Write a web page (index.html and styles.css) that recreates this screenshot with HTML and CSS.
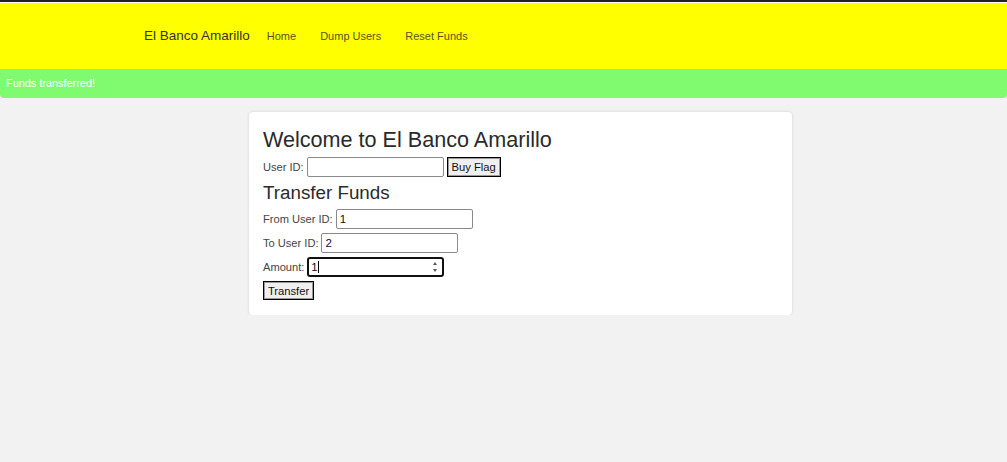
FILE: index.html
```html
<!DOCTYPE html>
<html>
<head>
<meta charset="utf-8">
<title>El Banco Amarillo</title>
<link rel="stylesheet" href="styles.css">
</head>
<body>
<header class="header">
  <nav class="nav">
    <a class="brand" href="#">El Banco Amarillo</a>
    <a class="nav-link" href="#">Home</a>
    <a class="nav-link" href="#">Dump Users</a>
    <a class="nav-link" href="#">Reset Funds</a>
  </nav>
</header>
<div class="alert">Funds transferred!</div>
<main class="card">
  <h1 class="title">Welcome to El Banco Amarillo</h1>
  <div class="row">
    <label class="label">User ID:</label>
    <input class="field" type="text" value="">
    <button class="btn btn-flag">Buy Flag</button>
  </div>
  <h2 class="subtitle">Transfer Funds</h2>
  <div class="row">
    <label class="label">From User ID:</label>
    <input class="field" type="text" value="1">
  </div>
  <div class="row">
    <label class="label">To User ID:</label>
    <input class="field" type="text" value="2">
  </div>
  <div class="row">
    <label class="label">Amount:</label>
    <span class="num-wrap">
      <input class="field field-focus" type="text" value="1">
      <span class="caret"></span>
      <span class="spin"><span class="up"></span><span class="down"></span></span>
    </span>
  </div>
  <div class="row row-btn">
    <button class="btn btn-transfer">Transfer</button>
  </div>
</main>
</body>
</html>
```

FILE: styles.css
```css
html, body {
  margin: 0;
  padding: 0;
}
body {
  background: #f2f2f2;
  font-family: "Liberation Sans", Arial, sans-serif;
  color: #333;
}
.header {
  border-top: 2px solid #232323;
  padding-top: 1px;
  background: #fff;
}
.nav {
  background: #ffff00;
  height: 66px;
  display: flex;
  align-items: center;
  padding-left: 144px;
}
.brand {
  font-size: 13.5px;
  color: #333;
  text-decoration: none;
  margin-right: 5px;
  padding-bottom: 1px;
}
.nav-link {
  font-size: 11px;
  color: #55551a;
  text-decoration: none;
  padding: 0 12px;
  margin-top: -1px;
}
.alert {
  background: #80fa6e;
  color: #fff;
  font-size: 10.9px;
  height: 29px;
  line-height: 28px;
  padding-left: 6px;
  border-radius: 0 0 4px 4px;
}
.card {
  box-sizing: border-box;
  width: 543px;
  margin: 14px 0 0 249px;
  background: #fff;
  border-radius: 4px;
  box-shadow: 0 0 3px rgba(0, 0, 0, 0.14);
  padding: 16px 14px 15px;
  display: flex;
  flex-direction: column;
}
.title {
  margin: 0 0 5px;
  font-size: 21.6px;
  line-height: 24px;
  font-weight: normal;
  color: #2a2a2a;
}
.subtitle {
  margin: 1px 0 5px;
  font-size: 18.8px;
  line-height: 22px;
  font-weight: normal;
  color: #2a2a2a;
}
.row {
  display: flex;
  align-items: center;
  height: 20px;
  margin-bottom: 4px;
}
.row:last-child {
  margin-bottom: 0;
  height: 19px;
}
.label {
  font-size: 11.1px;
  color: #444;
  margin-right: 3px;
}
.field {
  box-sizing: border-box;
  width: 137px;
  height: 20px;
  border: 1px solid #8a8a8a;
  border-radius: 2px;
  padding: 1px 3px;
  font-family: "Liberation Sans", Arial, sans-serif;
  font-size: 11.5px;
  color: #111;
  background: #fff;
  outline: none;
}
.field-focus {
  border: 2px solid #111;
  border-radius: 3px;
  padding: 0 2px;
}
.num-wrap {
  position: relative;
  display: inline-block;
  height: 20px;
}
.caret {
  position: absolute;
  left: 11px;
  top: 4px;
  width: 1px;
  height: 12px;
  background: #000;
}
.spin {
  position: absolute;
  right: 6px;
  top: 5px;
  width: 7px;
  height: 10px;
  display: flex;
  flex-direction: column;
  justify-content: space-between;
  align-items: center;
}
.up {
  width: 0;
  height: 0;
  border-left: 2.5px solid transparent;
  border-right: 2.5px solid transparent;
  border-bottom: 3px solid #555;
}
.down {
  width: 0;
  height: 0;
  border-left: 2.5px solid transparent;
  border-right: 2.5px solid transparent;
  border-top: 3px solid #555;
}
.btn {
  box-sizing: border-box;
  font-family: "Liberation Sans", Arial, sans-serif;
  font-size: 11.2px;
  color: #111;
  background: #efefef;
  border: 1px solid #000;
  box-shadow: inset 0 0 0 1px #9a9a9a;
  border-radius: 0;
  padding: 0;
  white-space: nowrap;
  cursor: pointer;
}
.btn-flag {
  width: 54px;
  height: 20px;
  margin-left: 3px;
}
.btn-transfer {
  width: 51px;
  height: 19px;
}
```
